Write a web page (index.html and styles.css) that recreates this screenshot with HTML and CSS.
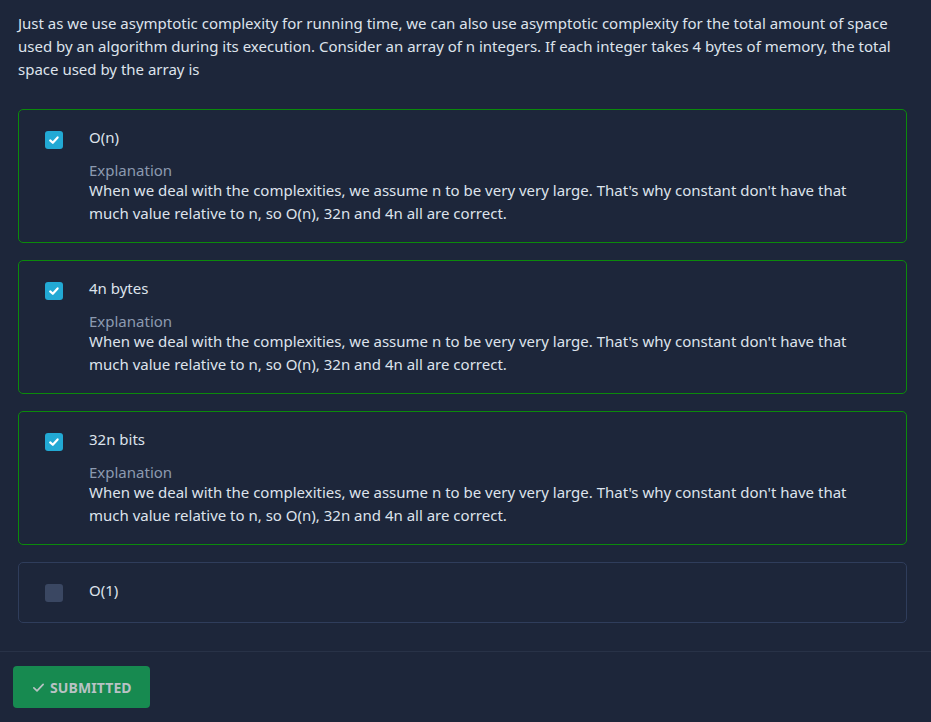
FILE: index.html
```html
<!DOCTYPE html>
<html>
<head>
<meta charset="utf-8">
<link rel="stylesheet" href="styles.css">
</head>
<body>
<div class="page">
  <p class="question">Just as we use asymptotic complexity for running time, we can also use asymptotic complexity for the total amount of space used by an algorithm during its execution. Consider an array of n integers. If each integer takes 4 bytes of memory, the total space used by the array is</p>
  <div class="options">
    <div class="option correct">
      <span class="box checked"><svg viewBox="0 0 18 18" width="18" height="18"><path d="M5.2 9.4 L7.8 11.8 L12.6 6.4" fill="none" stroke="#fff" stroke-width="2.2" stroke-linecap="round" stroke-linejoin="round"/></svg></span>
      <div class="body">
        <div class="label">O(n)</div>
        <div class="expl-title">Explanation</div>
        <div class="expl">When we deal with the complexities, we assume n to be very very large. That's why constant don't have that much value relative to n, so O(n), 32n and 4n all are correct.</div>
      </div>
    </div>
    <div class="option correct">
      <span class="box checked"><svg viewBox="0 0 18 18" width="18" height="18"><path d="M5.2 9.4 L7.8 11.8 L12.6 6.4" fill="none" stroke="#fff" stroke-width="2.2" stroke-linecap="round" stroke-linejoin="round"/></svg></span>
      <div class="body">
        <div class="label">4n bytes</div>
        <div class="expl-title">Explanation</div>
        <div class="expl">When we deal with the complexities, we assume n to be very very large. That's why constant don't have that much value relative to n, so O(n), 32n and 4n all are correct.</div>
      </div>
    </div>
    <div class="option correct">
      <span class="box checked"><svg viewBox="0 0 18 18" width="18" height="18"><path d="M5.2 9.4 L7.8 11.8 L12.6 6.4" fill="none" stroke="#fff" stroke-width="2.2" stroke-linecap="round" stroke-linejoin="round"/></svg></span>
      <div class="body">
        <div class="label">32n bits</div>
        <div class="expl-title">Explanation</div>
        <div class="expl">When we deal with the complexities, we assume n to be very very large. That's why constant don't have that much value relative to n, so O(n), 32n and 4n all are correct.</div>
      </div>
    </div>
    <div class="option plain">
      <span class="box"></span>
      <div class="body">
        <div class="label">O(1)</div>
      </div>
    </div>
  </div>
  <div class="footer">
    <button class="submitted"><svg viewBox="0 0 14 14" width="13" height="13"><path d="M2 7.4 L5.4 10.6 L12 3.6" fill="none" stroke="#b9c2c4" stroke-width="1.8" stroke-linecap="round" stroke-linejoin="round"/></svg>SUBMITTED</button>
  </div>
</div>
</body>
</html>
```
FILE: styles.css
```css
html, body {
  margin: 0;
  padding: 0;
  background: #1d263a;
}
body {
  font-family: "Noto Sans", "Open Sans", sans-serif;
  color: #dde3ec;
  font-size: 15px;
}
.page {
  padding: 12px 0 0 0;
}
.question {
  margin: 0 25px 0 18px;
  line-height: 23px;
}
.options {
  margin: 28px 24px 0 18px;
  display: flex;
  flex-direction: column;
  gap: 17px;
}
.option {
  border: 1px solid #2f3d5b;
  border-radius: 5px;
  display: flex;
  padding: 17px 26px 17px 26px;
}
.option.plain {
  padding-bottom: 20px;
}
.option.correct {
  border-color: #0b8a0b;
}
.box {
  width: 18px;
  height: 18px;
  border-radius: 3px;
  background: #3a4762;
  flex: none;
  margin-top: 4px;
  display: flex;
}
.box.checked {
  background: #22a9d4;
}
.body {
  margin-left: 26px;
}
.label {
  line-height: 20px;
}
.expl-title {
  margin-top: 13px;
  color: #8c9ab0;
  line-height: 20px;
}
.expl {
  margin-top: -1px;
  line-height: 23px;
}
.footer {
  margin-top: 28px;
  border-top: 1px solid #283247;
  padding: 14px 13px 20px;
}
.submitted {
  display: flex;
  align-items: center;
  gap: 5px;
  width: 137px;
  height: 42px;
  background: #178a50;
  border: none;
  border-radius: 4px;
  color: #b9c2c4;
  font-family: "Noto Sans", sans-serif;
  font-weight: 700;
  font-size: 14px;
  padding: 0 0 0 19px;
  letter-spacing: 0.1px;
}
```
